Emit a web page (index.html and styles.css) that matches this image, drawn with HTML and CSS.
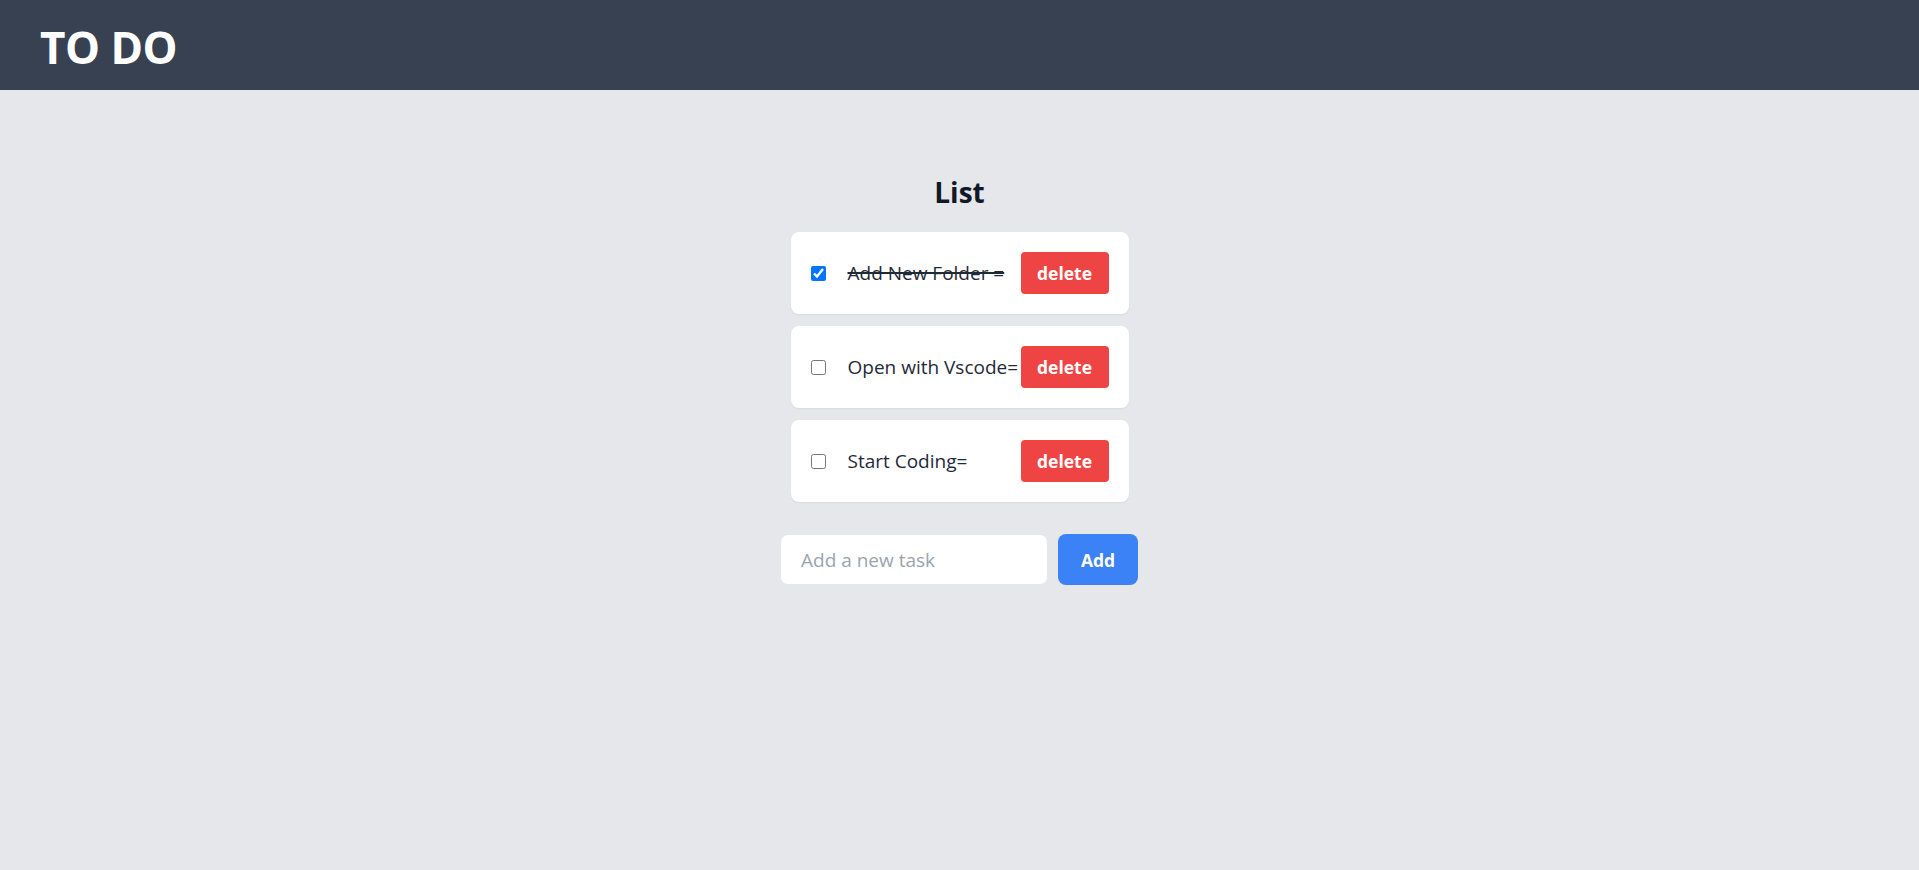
FILE: index.html
```html
<!DOCTYPE html>
<html lang="en">
<head>
<meta charset="utf-8">
<title>TO DO</title>
<link rel="stylesheet" href="styles.css">
</head>
<body>
  <header class="topbar">
    <h1 class="brand">TO DO</h1>
  </header>
  <main class="content">
    <h2 class="list-title">List</h2>
    <ul class="task-list">
      <li class="task-card">
        <input class="task-check" type="checkbox" checked>
        <span class="task-text done">Add New Folder =</span>
        <button class="btn-delete" type="button">delete</button>
      </li>
      <li class="task-card">
        <input class="task-check" type="checkbox">
        <span class="task-text">Open with Vscode=</span>
        <button class="btn-delete" type="button">delete</button>
      </li>
      <li class="task-card">
        <input class="task-check" type="checkbox">
        <span class="task-text">Start Coding=</span>
        <button class="btn-delete" type="button">delete</button>
      </li>
    </ul>
    <form class="add-form" onsubmit="return false">
      <input class="add-input" type="text" placeholder="Add a new task">
      <button class="btn-add" type="submit">Add</button>
    </form>
  </main>
</body>
</html>
```

FILE: styles.css
```css
* { box-sizing: border-box; }

html, body {
  margin: 0;
  padding: 0;
  height: 100%;
}

body {
  background: #e5e7eb;
  font-family: "Open Sans", "Noto Sans", "Liberation Sans", sans-serif;
  color: #1f2937;
}

.topbar {
  background: #374151;
  height: 90px;
  display: flex;
  align-items: center;
  padding-left: 40px;
  padding-top: 4px;
}

.brand {
  margin: 0;
  color: #ffffff;
  font-size: 44px;
  font-weight: 700;
  line-height: 1;
  letter-spacing: -0.5px;
}

.content {
  display: flex;
  flex-direction: column;
  align-items: center;
  padding-top: 84px;
}

.list-title {
  margin: 0;
  font-size: 28px;
  line-height: 36px;
  font-weight: 700;
  color: #111827;
}

.task-list {
  list-style: none;
  margin: 22px 0 0;
  padding: 0;
  display: flex;
  flex-direction: column;
  gap: 12px;
}

.task-card {
  width: 338px;
  height: 82px;
  background: #ffffff;
  border-radius: 8px;
  box-shadow: 0 1px 2px rgba(0, 0, 0, 0.06);
  padding: 20px;
  display: flex;
  align-items: center;
}

.task-check {
  margin: 0;
  width: 15px;
  height: 15px;
  flex: none;
}

.task-text {
  flex: 1;
  margin-left: 22px;
  font-size: 19px;
  white-space: nowrap;
  color: #1f2937;
}

.task-text.done {
  text-decoration: line-through;
  text-decoration-thickness: 2px;
}

.btn-delete {
  flex: none;
  width: 88px;
  height: 42px;
  border: none;
  border-radius: 4px;
  background: #ef4444;
  color: #ffffff;
  font-family: inherit;
  font-size: 17.5px;
  font-weight: 700;
  padding: 0;
}

.add-form {
  margin: 32px 0 0;
  display: flex;
  align-items: center;
  gap: 11px;
}

.add-input {
  width: 266px;
  height: 49px;
  border: none;
  border-radius: 7px;
  background: #ffffff;
  padding: 0 20px;
  font-family: inherit;
  font-size: 19px;
  color: #1f2937;
  outline: none;
}

.add-input::placeholder {
  color: #9ca3af;
}

.btn-add {
  width: 80px;
  height: 51px;
  border: none;
  border-radius: 8px;
  background: #3b82f6;
  color: #ffffff;
  font-family: inherit;
  font-size: 17.5px;
  font-weight: 700;
  padding: 0;
}
```
